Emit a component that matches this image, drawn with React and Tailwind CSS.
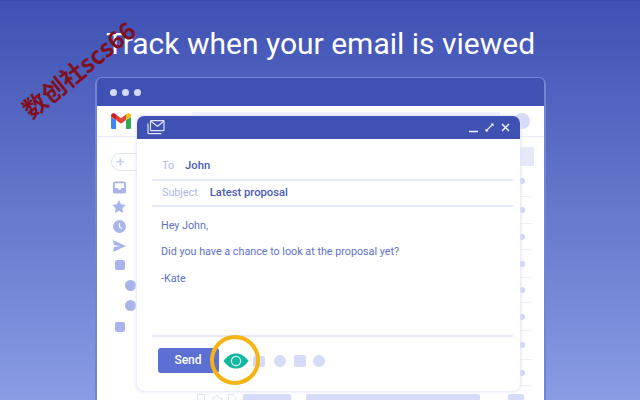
const font = { fontFamily: "Roboto, sans-serif" };

const GmailLogo = () => (
  <svg width="22" height="16" viewBox="0 0 22 16">
    <path d="M1 4v10.500A1.500 1.500 0 0 0 2.500 16H6V7z" fill="#4285f4" />
    <path d="M21 4v10.500a1.500 1.500 0 0 1-1.500 1.500H16V7z" fill="#34a853" />
    <path d="M16 1.500V7l5-3.500V2.500C21 .6 18.800-.5 17.300.6z" fill="#fbbc04" />
    <path d="M6 7V1.500L11 5.300l5-3.800V7l-5 3.800z" fill="#ea4335" />
    <path d="M1 2.500v1L6 7V1.500L4.700.6C3.200-.5 1 .6 1 2.500z" fill="#c5221f" />
  </svg>
);

const ComposeIcon = () => (
  <svg width="18" height="15" viewBox="0 0 18 15" fill="none" stroke="#dfe4f8" strokeWidth="1.200">
    <rect x="3.500" y="0.700" width="13.500" height="10" rx="0.500" />
    <path d="M3.800 1.200l6.700 5 6.300-5" />
    <path d="M1 3.500v9.200a1 1 0 0 0 1 1h12.500" />
  </svg>
);

const Rule = () => <div className="h-[2px] bg-[#e6e9f8]" />;

const ListRow = ({ h }) => (
  <div className={`flex items-center justify-end border-b border-[#eceefb] mr-[12px] pr-[7px] ${h}`}>
    <div className="w-[6px] h-[6px] rounded-full bg-[#cdd5f6]" />
  </div>
);

const Sidebar = () => (
  <div className="w-[44px] shrink-0 flex flex-col items-center pt-[16px]">
    <div className="w-[30px] h-[18px] ml-[14px] rounded-l-full border border-[#dfe3f7] flex items-center pl-[4px] text-[#c3cbf1] text-[15px] leading-none">
      +
    </div>
    <svg className="mt-[10px]" width="13" height="13" viewBox="0 0 14 13">
      <path fillRule="evenodd" d="M2 0h10a2 2 0 0 1 2 2v9a2 2 0 0 1-2 2H2a2 2 0 0 1-2-2V2a2 2 0 0 1 2-2zM2 2v5h3a2 2 0 0 0 4 0h3V2z" fill="#a9b5ea" />
    </svg>
    <svg className="mt-[6px]" width="14" height="13" viewBox="0 0 24 23">
      <path d="M12 0l3.700 7.600 8.300 1.200-6 5.900 1.400 8.300L12 19l-7.400 4L6 14.700 0 8.800l8.300-1.200z" fill="#a9b5ea" />
    </svg>
    <svg className="mt-[7px]" width="13" height="13" viewBox="0 0 13 13">
      <circle cx="6.500" cy="6.500" r="6.500" fill="#a9b5ea" />
      <path d="M6.500 3v4l2.500 1.500" stroke="#fff" strokeWidth="1.200" fill="none" />
    </svg>
    <svg className="mt-[7px]" width="13" height="12" viewBox="0 0 13 12">
      <path d="M0 0l13 6-13 6 1-5 6-1-6-1z" fill="#a9b5ea" />
    </svg>
    <div className="mt-[8px] ml-[2px] w-[10px] h-[10px] rounded-[2px] bg-[#a9b5ea]" />
    <div className="mt-[10px] ml-[22px] w-[11px] h-[11px] rounded-full bg-[#a9b5ea]" />
    <div className="mt-[9px] ml-[22px] w-[11px] h-[11px] rounded-full bg-[#a9b5ea]" />
    <div className="mt-[11px] ml-[2px] w-[10px] h-[10px] rounded-[2px] bg-[#a9b5ea]" />
  </div>
);

const Compose = () => (
  <div className="absolute left-[40px] top-[37px] w-[383px] h-[275px] bg-white rounded-[7px] flex flex-col shadow-[0_0_3px_1px_#dfe3f8] overflow-hidden">
    <div className="h-[23px] shrink-0 bg-[#3f51b3] flex items-center justify-between pl-[10px] pr-[10px]">
      <ComposeIcon />
      <div className="flex items-center gap-[6px] text-[#eef0fb]">
        <svg width="10" height="10" viewBox="0 0 10 10" stroke="currentColor" strokeWidth="1.300">
          <path d="M0 8.500h9" />
        </svg>
        <svg width="9" height="9" viewBox="0 0 9 9" stroke="currentColor" strokeWidth="1.100" fill="currentColor">
          <path d="M1 8l7-7" />
          <path d="M5.500 0.500H8.500V3.500z" stroke="none" />
          <path d="M0.500 5.500V8.500H3.500z" stroke="none" />
        </svg>
        <svg className="ml-[1px]" width="9" height="9" viewBox="0 0 9 9" stroke="currentColor" strokeWidth="1.500">
          <path d="M1 1l7 7M8 1l-7 7" />
        </svg>
      </div>
    </div>
    <div className="ml-[15px] mr-[7px] flex flex-col flex-1 text-[10.750px]" style={font}>
      <div className="h-[40px] shrink-0 flex items-center pl-[10px] pt-[14px]">
        <span className="text-[#aeb8e8]">To</span>
        <span className="ml-[11px] text-[11.250px] font-medium text-[#4a5cb8]">John</span>
      </div>
      <Rule />
      <div className="h-[24px] shrink-0 flex items-center pl-[10px]">
        <span className="text-[#aeb8e8]">Subject</span>
        <span className="ml-[12px] text-[11.250px] font-medium text-[#4a5cb8]">Latest proposal</span>
      </div>
      <Rule />
      <div className="h-[128px] shrink-0 pl-[9px] pt-[12px] text-[#5f72c8] flex flex-col gap-[13px] leading-[13px]">
        <p>Hey John,</p>
        <p>Did you have a chance to look at the proposal yet?</p>
        <p className="mt-[1px]">-Kate</p>
      </div>
      <Rule />
      <div className="flex items-center mt-[11px]">
        <div className="w-[61px] h-[25px] ml-[6px] rounded-[3px] bg-[#5b70d2] text-white text-[12px] font-medium flex items-center justify-center pr-[1px] pb-[1px]">
          Send
        </div>
        <svg className="ml-[4px] mt-[1px]" width="26" height="16" viewBox="0 0 26 16">
          <path d="M0.500 8C4 3 8 0.500 13 0.500S22 3 25.500 8C22 13 18 15.500 13 15.500S4 13 0.500 8z" fill="#14b8a0" />
          <circle cx="13" cy="8" r="4.600" fill="none" stroke="#d8f5ef" strokeWidth="1.200" />
        </svg>
        <div className="ml-[4px] mt-[1px] w-[12px] h-[11px] rounded-[2px] bg-[#d6dcf8]" />
        <div className="ml-[9px] mt-[1px] w-[12px] h-[12px] rounded-full bg-[#d6dcf8]" />
        <div className="ml-[8px] mt-[1px] w-[12px] h-[12px] rounded-[2px] bg-[#d6dcf8]" />
        <div className="ml-[7px] mt-[1px] w-[12px] h-[12px] rounded-full bg-[#d6dcf8]" />
      </div>
    </div>
    {/* highlight ring round the tracking eye */}
    <div className="absolute left-[73px] top-[219px] w-[50px] h-[50px] rounded-full border-[4px] border-[#f5b314]" />
  </div>
);

export default function App() {
  return (
    <div
      className="relative w-[640px] h-[400px] overflow-hidden flex flex-col items-center border-t border-[#3a4aa8] bg-gradient-to-b from-[#3f51b3] to-[#8a9ce4]"
      style={font}
    >
      <h1 className="mt-[25px] ml-[1px] text-white text-[30px] leading-[35px] font-normal whitespace-nowrap">
        Track when your email is viewed
      </h1>
      <div className="mt-[16px] ml-[1px] w-[451px] flex-1 min-h-0 relative rounded-t-[7px] border-2 border-b-0 border-[#7384d6] bg-white">
        <div className="h-[28px] -mt-px bg-[#3f51b3] rounded-t-[5px] flex items-center gap-[5px] pl-[13px]">
          <div className="w-[7px] h-[7px] rounded-full bg-[#d4daf7]" />
          <div className="w-[7px] h-[7px] rounded-full bg-[#d4daf7]" />
          <div className="w-[7px] h-[7px] rounded-full bg-[#d4daf7]" />
        </div>
        <div className="h-[31px] border-b border-[#e6e9f8] flex items-center pl-[13px] pr-[14px]">
          <GmailLogo />
          <div className="ml-[60px] w-[308px] h-[18px] rounded-[2px] bg-[#f0f2fc]" />
          <div className="ml-auto w-[16px] h-[16px] rounded-full bg-[#d6dcf8]" />
        </div>
        <div className="flex">
          <Sidebar />
          <div className="flex-1 flex flex-col">
            <div className="h-[10px]" />
            <div className="self-end w-[14px] h-[19px] mr-[10px] bg-[#e6e9fa]" />
            <ListRow h="h-[31px]" />
            <ListRow h="h-[27px]" />
            <ListRow h="h-[26px]" />
            <ListRow h="h-[28px]" />
            <ListRow h="h-[25px]" />
            <ListRow h="h-[28px]" />
            <ListRow h="h-[29px]" />
            <ListRow h="h-[26px]" />
            <div className="flex items-start mt-[8px] pl-[56px]">
              <svg width="40" height="6" viewBox="0 0 40 6" fill="none" stroke="#e0e4f8">
                <rect x="0.500" y="0.500" width="7" height="8" />
                <path d="M20 0.500l1.700 3.500 3.800.5-2.700 2.700.6 3.800L20 9l-3.400 1.500.6-3.800-2.700-2.700 3.800-.5z" />
                <path d="M31.500 0.500h5l2.500 4-2.500 4h-5z" />
              </svg>
              <div className="ml-[6px] w-[48px] h-[6px] rounded-t-[2px] bg-[#d6dcf8]" />
              <div className="ml-[15px] w-[174px] h-[6px] rounded-t-[2px] bg-[#d6dcf8]" />
              <div className="ml-[28px] w-[16px] h-[6px] rounded-t-[2px] bg-[#d6dcf8]" />
            </div>
          </div>
        </div>
        <Compose />
      </div>
      {/* watermark */}
      <div
        className="absolute left-[10px] top-[56px] text-[#7f1020] text-[24px] font-bold leading-none whitespace-nowrap -rotate-[39deg]"
        style={{ fontFamily: '"Noto Sans CJK SC", sans-serif' }}
      >
        数创社scs66
      </div>
    </div>
  );
}
